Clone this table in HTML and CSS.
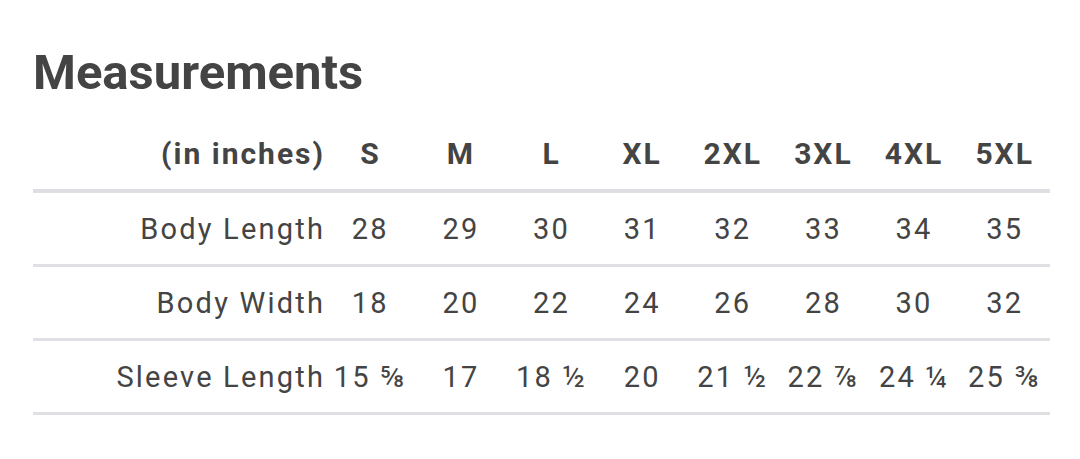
FILE: index.html
```html
<!DOCTYPE html>
<html>
<head>
<meta charset="utf-8">
<link rel="stylesheet" href="styles.css">
</head>
<body>
<div class="page">
  <h1 class="title">Measurements</h1>
  <table class="sizes">
    <thead>
      <tr>
        <th class="label">(in inches)</th>
        <th>S</th><th>M</th><th>L</th><th>XL</th><th>2XL</th><th>3XL</th><th>4XL</th><th>5XL</th>
      </tr>
    </thead>
    <tbody>
      <tr>
        <td class="label">Body Length</td>
        <td>28</td><td>29</td><td>30</td><td>31</td><td>32</td><td>33</td><td>34</td><td>35</td>
      </tr>
      <tr>
        <td class="label">Body Width</td>
        <td>18</td><td>20</td><td>22</td><td>24</td><td>26</td><td>28</td><td>30</td><td>32</td>
      </tr>
      <tr>
        <td class="label">Sleeve Length</td>
        <td>15 ⅝</td><td>17</td><td>18 ½</td><td>20</td><td>21 ½</td><td>22 ⅞</td><td>24 ¼</td><td>25 ⅜</td>
      </tr>
    </tbody>
  </table>
</div>
</body>
</html>
```
FILE: styles.css
```css
html, body {
  margin: 0;
  padding: 0;
  background: #ffffff;
}
.page {
  padding: 43px 30px 0 33px;
  font-family: Roboto, "Liberation Sans", sans-serif;
  color: #444444;
}
.title {
  margin: 0 0 32px 0;
  font-size: 49px;
  font-weight: 700;
  line-height: 60px;
  color: #444444;
}
.sizes {
  width: 1017px;
  border-collapse: collapse;
  table-layout: fixed;
}
.sizes th, .sizes td {
  width: 90.6px;
  text-align: center;
  padding: 0;
  white-space: nowrap;
}
.sizes th.label, .sizes td.label {
  width: 292px;
  text-align: right;
  padding-right: 0;
}
.sizes thead th {
  font-size: 30px;
  font-weight: 700;
  letter-spacing: 2px;
  height: 53px;
  vertical-align: top;
  padding-top: 1px;
  border-bottom: 4px solid #dfdfe3;
}
.sizes tbody td {
  font-size: 29px;
  font-weight: 400;
  letter-spacing: 2.2px;
  height: 71px;
  border-bottom: 3px solid #e0e0e4;
}
```
